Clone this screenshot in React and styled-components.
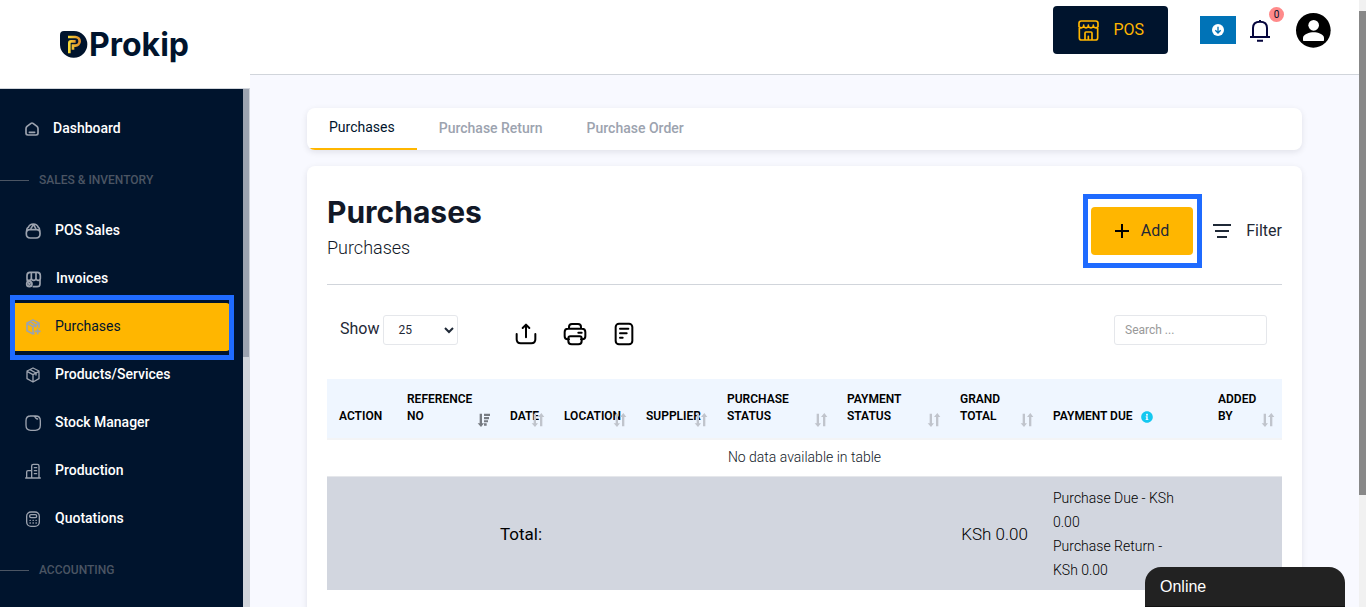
import { useState } from 'react';
import styled, { createGlobalStyle, css } from 'styled-components';
import { FaInfoCircle } from 'react-icons/fa';

const NAVY = '#00142d';
const YELLOW = '#ffb600';
const BORDER = '#d1d5db';

const GlobalStyle = createGlobalStyle`
  * {
    box-sizing: border-box;
  }

  body {
    background: #f8f9ff;
    color: #111827;
    font-family: Roboto, "Liberation Sans", sans-serif;
    margin: 0;
  }

  button, input, select {
    font-family: inherit;
  }
`;

const Shell = styled.div`
  display: grid;
  grid-template-columns: 250px minmax(0, 1fr) 7px;
  height: 100vh;
  overflow: hidden;
`;

const Sidebar = styled.aside`
  display: flex;
  flex-direction: column;
  min-height: 0;
`;

const LogoLink = styled.a`
  align-items: center;
  background: #fff;
  border-bottom: 1px solid ${BORDER};
  color: ${NAVY};
  display: flex;
  flex: none;
  font: 700 32px/40px Inter, sans-serif;
  gap: 1px;
  height: 89px;
  padding: 2px 0 0 60px;
  text-decoration: none;
`;

const SidebarBody = styled.div`
  background: ${NAVY};
  display: flex;
  flex: 1;
  min-height: 0;
  overflow: hidden;
`;

const Nav = styled.nav`
  flex: 1;
  padding-top: 16px;
`;

const NavItem = styled.a`
  align-items: center;
  border-radius: 4px;
  color: #fff;
  display: flex;
  font-size: 14px;
  font-weight: 500;
  gap: 14px;
  height: 48px;
  margin: 0 13px 0 10px;
  padding-left: 15px;
  position: relative;
  text-decoration: none;

  svg {
    color: #9ca3af;
    flex: none;
  }

  ${(props) => props.$active && css`
    background: ${YELLOW};
    color: ${NAVY};
    font-weight: 400;
  `}
`;

const NavLabel = styled.span`
  line-height: 18px;
  padding-bottom: 2px;
`;

const NavSection = styled.div`
  align-items: center;
  color: #4b5563;
  display: flex;
  font-size: 12px;
  font-weight: 500;
  gap: 10px;
  height: 54px;

  &::before {
    background: #4b5563;
    content: '';
    height: 1px;
    width: 29px;
  }
`;

const Highlight = styled.span`
  border: 5px solid #1f6bff;
  inset: ${(props) => props.$inset};
  pointer-events: none;
  position: absolute;
`;

const SidebarTrack = styled.div`
  background: ${BORDER};
  width: 7px;
`;

const SidebarThumb = styled.div`
  background: #9ca3af;
  height: 268px;
  width: 6px;
`;

const PageTrack = styled.div`
  background: #f1f1f1;
  padding-top: 11px;
`;

const PageThumb = styled.div`
  background: #888;
  height: 484px;
`;

const Main = styled.div`
  overflow: hidden;
`;

const Header = styled.header`
  align-items: center;
  background: #fff;
  border-bottom: 1px solid ${BORDER};
  display: flex;
  justify-content: flex-end;
  padding: 6px 28px 20px;
`;

const IconButton = styled.button`
  background: none;
  border: 0;
  color: #000;
  display: flex;
  padding: 0;
  position: relative;
`;

const PosButton = styled.button`
  align-items: center;
  background: ${NAVY};
  border: 0;
  border-radius: 4px;
  color: ${YELLOW};
  display: flex;
  font-size: 16px;
  gap: 14px;
  height: 48px;
  margin-right: 32px;
  padding: 0 24px 0 25px;
`;

const ButtonText = styled.span`
  line-height: 20px;
`;

const DownloadButton = styled.button`
  align-items: center;
  background: #0073b7;
  border: 0;
  display: flex;
  height: 28px;
  justify-content: center;
  margin-right: 13px;
  padding: 0;
  width: 36px;
`;

const BellButton = styled(IconButton)`
  color: #06063d;
  margin-right: 25px;
`;

const Badge = styled.span`
  background: #ff8a8a;
  border-radius: 50%;
  color: ${NAVY};
  font-size: 10px;
  height: 15px;
  line-height: 15px;
  position: absolute;
  right: -13px;
  text-align: center;
  top: -11px;
  width: 15px;
`;

const Content = styled.main`
  display: flex;
  flex-direction: column;
  gap: 16px;
  padding: 33px 57px;
`;

const Card = styled.section`
  background: #fff;
  border-radius: 8px;
  box-shadow: 0 2px 6px rgba(17, 24, 39, 0.1);
`;

const Tabs = styled(Card).attrs({ as: 'nav' })`
  display: flex;
  overflow: hidden;
`;

const Tab = styled.button`
  background: none;
  border: 0;
  border-bottom: ${(props) => (props.$active ? `2px solid ${YELLOW}` : '0')};
  color: ${(props) => (props.$active ? NAVY : '#9ca3af')};
  font-size: 14px;
  font-weight: ${(props) => (props.$active ? 400 : 500)};
  height: 42px;
  padding: 0 22px 2px;
`;

const Panel = styled(Card)`
  padding: 27px 20px 60px;
`;

const PanelHeader = styled.div`
  align-items: center;
  border-bottom: 1px solid ${BORDER};
  display: flex;
  justify-content: space-between;
  padding-bottom: 20px;
`;

const Title = styled.h1`
  font: 700 30px/38px Inter, sans-serif;
  margin: 0 0 1px;
`;

const Subtitle = styled.p`
  font-size: 18px;
  font-weight: 300;
  line-height: 32px;
  margin: 0;
`;

const Actions = styled.div`
  align-items: center;
  display: flex;
  gap: 20px;
  padding-top: 5px;
`;

const AddButton = styled.button`
  align-items: center;
  background: ${YELLOW};
  border: 0;
  border-radius: 4px;
  color: #1f2937;
  display: flex;
  font-size: 16px;
  gap: 10px;
  height: 48px;
  padding: 0 24px 0 22px;
  position: relative;

  svg {
    color: #000;
  }
`;

const FilterButton = styled(IconButton)`
  align-items: center;
  color: #1f2937;
  font-size: 16px;
  gap: 15px;
`;

const Toolbar = styled.div`
  align-items: flex-start;
  display: flex;
  margin-bottom: 33px;
  padding: 30px 15px 0 13px;
`;

const LengthLabel = styled.label`
  color: #1f2937;
  display: flex;
  gap: 4px;
  line-height: 27px;
`;

const LengthSelect = styled.select`
  background: #fff;
  border: 1px solid #e5e7eb;
  border-radius: 3px;
  color: #1f2937;
  font-size: 12px;
  height: 30px;
  padding: 0 0 0 10px;
  width: 75px;
`;

const ExportButtons = styled.div`
  display: flex;
  flex: 1;
  gap: 25px;
  padding: 7px 0 0 56px;
`;

const SearchInput = styled.input`
  border: 1px solid #e5e7eb;
  border-radius: 3px;
  font-size: 12px;
  height: 30px;
  padding: 0 10px;
  width: 153px;

  &::placeholder {
    color: #999;
  }
`;

const Table = styled.table`
  border-collapse: separate;
  border-spacing: 0;
  table-layout: fixed;
  width: 100%;
`;

const Th = styled.th`
  background: #eff6ff;
  border-bottom: 2px solid #f3f4f6;
  color: #000;
  font-size: 12px;
  font-weight: 600;
  height: 61px;
  line-height: 17px;
  padding: 10px 20px 13px 12px;
  position: relative;
  text-align: left;
  vertical-align: bottom;
`;

const HeadLine = styled.span`
  align-items: center;
  display: flex;
  gap: 8px;
  white-space: nowrap;

  svg {
    color: #14c8f0;
  }
`;

const SortSvg = styled.svg`
  bottom: 10px;
  color: ${(props) => (props.$sorted ? '#777b82' : '#c0c4cc')};
  position: absolute;
  right: 7px;
`;

const EmptyCell = styled.td`
  font-size: 14px;
  font-weight: 300;
  height: 36px;
  padding: 0 0 2px;
  text-align: center;
`;

const FootCell = styled.td`
  background: #d2d6df;
  border-top: 1px solid #e5e7eb;
  color: #000;
  font-size: ${(props) => (props.$small ? '14px' : '17px')};
  font-weight: ${(props) => (props.$light ? 300 : 400)};
  line-height: 24px;
  padding: ${(props) => (props.$small ? '9px 24px 8px 12px' : '9px 0 8px')};
  text-align: ${(props) => (props.$small ? 'left' : 'center')};
`;

const ChatButton = styled.button`
  background: #222;
  border: 0;
  border-bottom: 1px solid #111;
  border-radius: 16px 16px 0 0;
  bottom: 0;
  color: #fff;
  font: 16px/38px "Liberation Sans", Arial, sans-serif;
  height: 40px;
  padding: 0 15px;
  position: fixed;
  right: 21px;
  text-align: left;
  width: 200px;
`;

const Stroke = ({ size, box = 24, width = 2, children }) => (
  <svg
    width={size}
    height={size}
    viewBox={`0 0 ${box} ${box}`}
    fill='none'
    stroke='currentColor'
    strokeWidth={width}
    strokeLinecap='round'
    strokeLinejoin='round'
    aria-hidden='true'
  >
    {children}
  </svg>
);

const LogoMark = () => (
  <svg width='28' height='28' viewBox='0 0 84 84' aria-hidden='true'>
    <defs>
      <linearGradient id='mark' x1='0' x2='1'>
        <stop offset='0' stopColor='#f6d936' />
        <stop offset='1' stopColor='#e2912c' />
      </linearGradient>
    </defs>
    <path d='M0 42V12Q0 0 12 0H42A40 40 0 0 1 82 40A40 40 0 0 1 42 80H40A40 40 0 0 1 0 42Z' fill={NAVY} />
    <g fill='none' stroke='url(#mark)' strokeWidth='8'>
      <path d='M24 18H46A13 13 0 0 1 46 44H39V56' />
      <path d='M28 67V36Q28 31 33 31H47' />
    </g>
  </svg>
);

const HomeIcon = () => (
  <Stroke size={14} box={42} width={5}>
    <path d='M3 20Q3 16 6 13L18 4Q21 2 24 4L36 13Q39 16 39 20V34Q39 39 33 39H9Q3 39 3 34Z' />
    <path d='M13 31H29' />
  </Stroke>
);

const BagIcon = () => (
  <Stroke size={16} box={48} width={5}>
    <path d='M14 20H35Q45 20 45 29V33Q45 45 33 45H16Q4 45 4 33V29Q4 20 14 20Z' />
    <path d='M5 23Q5 15 10 13Q14 3 25 3T40 13Q44 15 44 23M18 16L25 5M32 16L27 7' />
  </Stroke>
);

const InvoiceIcon = () => (
  <Stroke size={17} box={51} width={5}>
    <path d='M15 4H37Q46 4 46 14V22Q46 28 40 28Q33 28 33 22V4M33 22Q33 28 26 28T19 22V4M19 22Q19 28 12 28T6 22V14Q6 4 15 4' />
    <path d='M45 28V38Q45 47 36 47H25M7 28V31' />
    <circle cx='13' cy='39' r='8' />
    <path d='M10 36L16 42M16 36L10 42' />
  </Stroke>
);

const boxPath = 'M24 3L42 12V35L24 45L6 35V12ZM6 13L24 23L42 13M24 23V44M15 8L33 18V24';

const BoxIcon = () => (
  <Stroke size={16} box={48} width={4}>
    <path d={boxPath} />
  </Stroke>
);

const BoxAddIcon = () => (
  <Stroke size={16} box={48} width={5}>
    <path d='M42 25V12L24 3L6 12V35L24 45L27 43M6 13L24 23L42 13M24 23V44M15 8L33 18V23' />
    <path d='M38 30V44M31 37H45' />
  </Stroke>
);

const StockIcon = () => (
  <Stroke size={16} box={48} width={4}>
    <path d='M15 3H25Q29 3 31 7L33 10Q35 12 38 12M22 3H32Q46 3 46 17V31Q46 46 31 46H17Q3 46 3 31V17Q3 3 17 3' />
  </Stroke>
);

const FactoryIcon = () => (
  <Stroke size={16} box={48} width={4}>
    <path d='M2 45H46M5 45V27Q5 23 9 23H20M20 45V9Q20 4 25 4H37Q42 4 42 9V45M28 14H35M28 23H35M28 32H35' />
  </Stroke>
);

const CalculatorIcon = () => (
  <Stroke size={16} box={48} width={4}>
    <rect x='5' y='3' width='38' height='43' rx='13' />
    <rect x='14' y='11' width='21' height='9' rx='4' />
    <path d='M15 28H16M24 28H25M33 28H34M15 36H16M24 36H25M33 36H34' />
  </Stroke>
);

const StoreIcon = () => (
  <Stroke size={21} box={63} width={5}>
    <path d='M3 20V10Q3 3 10 3H53Q60 3 60 10V20M3 20Q9 27 17 20Q24 27 31 20Q39 27 46 20Q54 27 60 20M17 20V15M31 20V15M46 20V15M4 24V53Q4 60 11 60H52Q59 60 59 53V24M21 59V39Q21 36 24 36H39Q42 36 42 39V59M31 49V59' />
  </Stroke>
);

const DownloadIcon = () => (
  <svg width='12' height='12' viewBox='0 0 36 36' aria-hidden='true'>
    <circle cx='18' cy='18' r='18' fill='#fff' />
    <path d='M18 8V27M10 19L18 27L26 19' fill='none' stroke='#0073b7' strokeWidth='4' />
  </svg>
);

const BellIcon = () => (
  <svg width='22' height='24' viewBox='0 0 66 72' fill='none' stroke='currentColor' strokeWidth='6' aria-hidden='true'>
    <path d='M3 57H63M12 55V30Q12 11 33 11T54 30V55M24 68H42M33 10V6' />
  </svg>
);

const AvatarIcon = () => (
  <svg width='35' height='35' viewBox='0 0 105 105' aria-hidden='true'>
    <circle cx='52' cy='52' r='52' fill='#000' />
    <circle cx='53' cy='37' r='16' fill='#fff' />
    <path d='M21 82V75C21 64 41 58 53 58S84 64 84 75V82Q84 84 82 84H23Q21 84 21 82Z' fill='#fff' />
  </svg>
);

const PlusIcon = () => (
  <svg width='18' height='18' viewBox='0 0 18 18' stroke='currentColor' strokeWidth='2' aria-hidden='true'>
    <path d='M9 2V16M2 9H16' />
  </svg>
);

const FilterIcon = () => (
  <svg width='18' height='14' viewBox='0 0 18 14' stroke='currentColor' strokeWidth='2' aria-hidden='true'>
    <path d='M0 1H18M2 7H16M4 13H14' />
  </svg>
);

const ExportIcon = () => (
  <Stroke size={24} box={72} width={6}>
    <path d='M8 36V52Q8 64 20 64H52Q64 64 64 52V36M36 46V9M26 18L36 8L46 18' />
  </Stroke>
);

const PrintIcon = () => (
  <Stroke size={24} box={72} width={6}>
    <path d='M18 20V15Q18 6 27 6H45Q54 6 54 15V20M18 52H14Q5 52 5 43V30Q5 20 15 20H57Q67 20 67 30V43Q67 52 58 52H54M46 32H56' />
    <path d='M16 49Q16 43 22 43H50Q56 43 56 49V57Q56 67 46 67H26Q16 67 16 57Z' />
  </Stroke>
);

const NoteIcon = () => (
  <Stroke size={24} box={72} width={6}>
    <rect x='11' y='5' width='50' height='62' rx='10' />
    <path d='M24 20H49M24 34H44M24 47H32' />
  </Stroke>
);

const SortIcon = ({ sorted }) => (
  <SortSvg width='14' height='16' viewBox='0 0 42 48' fill='currentColor' $sorted={sorted} aria-hidden='true'>
    <path d='M8 5H15V34H21L12 45L2 34H8Z' />
    {sorted ? (
      <path d='M21 5H39V12H21ZM21 15H36V22H21ZM21 25H33V31H21ZM21 34H29V41H21Z' />
    ) : (
      <path d='M27 43H34V15H40L31 3L21 15H27Z' />
    )}
  </SortSvg>
);

const salesItems = [
  { label: 'POS Sales', Icon: BagIcon },
  { label: 'Invoices', Icon: InvoiceIcon },
  { label: 'Purchases', Icon: BoxAddIcon, active: true },
  { label: 'Products/Services', Icon: BoxIcon },
  { label: 'Stock Manager', Icon: StockIcon },
  { label: 'Production', Icon: FactoryIcon },
  { label: 'Quotations', Icon: CalculatorIcon },
];

const tabs = ['Purchases', 'Purchase Return', 'Purchase Order'];

const columns = [
  { label: 'Action', width: 68 },
  { label: 'Reference No', width: 103, sort: true, sorted: true },
  { label: 'Date', width: 54, sort: true },
  { label: 'Location', width: 82, sort: true },
  { label: 'Supplier', width: 81, sort: true },
  { label: 'Purchase Status', width: 120, sort: true },
  { label: 'Payment Status', width: 113, sort: true },
  { label: 'Grand Total', width: 93, sort: true },
  { label: 'Payment Due', width: 165, info: true },
  { label: 'Added By', width: 76, sort: true },
];

const SideNav = () => (
  <Sidebar>
    <LogoLink href='#home'>
      <LogoMark />
      Prokip
    </LogoLink>
    <SidebarBody>
      <Nav>
        <NavItem href='#dashboard'>
          <HomeIcon />
          <NavLabel>Dashboard</NavLabel>
        </NavItem>
        <NavSection>SALES &amp; INVENTORY</NavSection>
        {salesItems.map(({ label, Icon, active }) => (
          <NavItem key={label} href='#sales' $active={active}>
            <Icon />
            <NavLabel>{label}</NavLabel>
            {active && <Highlight $inset='-8px -4px -9px 0' />}
          </NavItem>
        ))}
        <NavSection>ACCOUNTING</NavSection>
      </Nav>
      <SidebarTrack>
        <SidebarThumb />
      </SidebarTrack>
    </SidebarBody>
  </Sidebar>
);

const PurchasesTable = () => (
  <Table>
    <colgroup>
      {columns.map(({ label, width }) => (
        <col key={label} style={{ width }} />
      ))}
    </colgroup>
    <thead>
      <tr>
        {columns.map(({ label, sort, sorted, info }) => (
          <Th key={label} scope='col'>
            {info ? (
              <HeadLine>
                {label.toUpperCase()}
                <FaInfoCircle size={12} />
              </HeadLine>
            ) : label.toUpperCase()}
            {sort && <SortIcon sorted={sorted} />}
          </Th>
        ))}
      </tr>
    </thead>
    <tbody>
      <tr>
        <EmptyCell colSpan={10}>No data available in table</EmptyCell>
      </tr>
    </tbody>
    <tfoot>
      <tr>
        <FootCell colSpan={5}>Total:</FootCell>
        <FootCell />
        <FootCell />
        <FootCell $light>KSh 0.00</FootCell>
        <FootCell $small $light>
          <div>Purchase Due - KSh 0.00</div>
          <div>Purchase Return - KSh&nbsp;0.00</div>
        </FootCell>
        <FootCell />
      </tr>
    </tfoot>
  </Table>
);

const App = () => {
  const [tab, setTab] = useState(tabs[0]);
  const [length, setLength] = useState('25');
  const [search, setSearch] = useState('');

  return (
    <>
      <GlobalStyle />
      <Shell>
        <SideNav />
        <Main>
          <Header>
            <PosButton type='button'>
              <StoreIcon />
              <ButtonText>POS</ButtonText>
            </PosButton>
            <DownloadButton type='button' aria-label='Download'>
              <DownloadIcon />
            </DownloadButton>
            <BellButton type='button' aria-label='Notifications'>
              <BellIcon />
              <Badge>0</Badge>
            </BellButton>
            <IconButton type='button' aria-label='Account'>
              <AvatarIcon />
            </IconButton>
          </Header>
          <Content>
            <Tabs>
              {tabs.map((name) => (
                <Tab key={name} type='button' $active={name === tab} onClick={() => setTab(name)}>
                  {name}
                </Tab>
              ))}
            </Tabs>
            <Panel>
              <PanelHeader>
                <div>
                  <Title>Purchases</Title>
                  <Subtitle>Purchases</Subtitle>
                </div>
                <Actions>
                  <AddButton type='button'>
                    <PlusIcon />
                    <ButtonText>Add</ButtonText>
                    <Highlight $inset='-13px -9px -13px -8px' />
                  </AddButton>
                  <FilterButton type='button'>
                    <FilterIcon />
                    <ButtonText>Filter</ButtonText>
                  </FilterButton>
                </Actions>
              </PanelHeader>
              <Toolbar>
                <LengthLabel>
                  Show
                  <LengthSelect value={length} onChange={(e) => setLength(e.target.value)}>
                    <option>25</option>
                    <option>50</option>
                    <option>100</option>
                  </LengthSelect>
                </LengthLabel>
                <ExportButtons>
                  <IconButton type='button' aria-label='Export'><ExportIcon /></IconButton>
                  <IconButton type='button' aria-label='Print'><PrintIcon /></IconButton>
                  <IconButton type='button' aria-label='Columns'><NoteIcon /></IconButton>
                </ExportButtons>
                <SearchInput
                  type='search'
                  aria-label='Search'
                  placeholder='Search ...'
                  value={search}
                  onChange={(e) => setSearch(e.target.value)}
                />
              </Toolbar>
              <PurchasesTable />
            </Panel>
          </Content>
        </Main>
        <PageTrack>
          <PageThumb />
        </PageTrack>
      </Shell>
      <ChatButton type='button'>Online</ChatButton>
    </>
  );
};

export default App;
